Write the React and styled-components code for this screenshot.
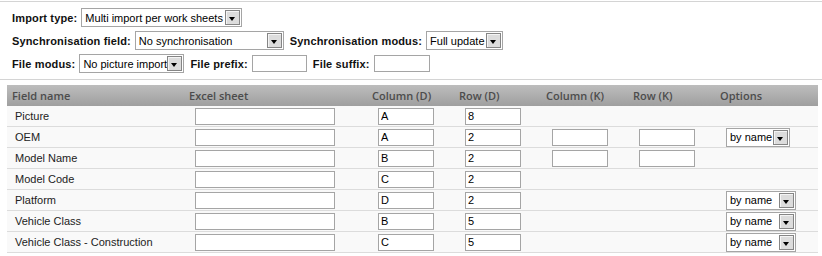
import React from 'react';
import styled, { createGlobalStyle } from 'styled-components';

const GlobalStyle = createGlobalStyle`
  body {
    margin: 0;
    background: #fff;
    font-family: "Liberation Sans", Arial, sans-serif;
    font-size: 11px;
    color: #222;
  }
`;

const columns = ['Field name', 'Excel sheet', 'Column (D)', 'Row (D)', 'Column (K)', 'Row (K)', 'Options'];

const rows = [
  { name: 'Picture', colD: 'A', rowD: '8' },
  { name: 'OEM', colD: 'A', rowD: '2', keys: true, option: 'narrow' },
  { name: 'Model Name', colD: 'B', rowD: '2', keys: true },
  { name: 'Model Code', colD: 'C', rowD: '2' },
  { name: 'Platform', colD: 'D', rowD: '2', option: 'wide' },
  { name: 'Vehicle Class', colD: 'B', rowD: '5', option: 'wide' },
  { name: 'Vehicle Class - Construction', colD: 'C', rowD: '5', option: 'wide' },
];

function Select({ value, width }) {
  return (
    <SelectBox $width={width}>
      <SelectValue>{value}</SelectValue>
      <SelectArrow />
    </SelectBox>
  );
}

function App() {
  return (
    <Page>
      <GlobalStyle />
      <Settings>
        <SettingsRow>
          <Label>Import type:</Label>
          <Select value="Multi import per work sheets" width={161} />
        </SettingsRow>
        <SettingsRow>
          <Label>Synchronisation field:</Label>
          <Select value="No synchronisation" width={149} />
          <Label>Synchronisation modus:</Label>
          <Select value="Full update" width={77} />
        </SettingsRow>
        <SettingsRow>
          <Label>File modus:</Label>
          <Select value="No picture import" width={105} />
          <Label>File prefix:</Label>
          <TextInput $width={55} defaultValue="" />
          <Label>File suffix:</Label>
          <TextInput $width={56} defaultValue="" />
        </SettingsRow>
      </Settings>

      <Table>
        <HeaderRow>
          {columns.map((c) => (
            <HeaderCell key={c}>{c}</HeaderCell>
          ))}
        </HeaderRow>
        {rows.map((r) => (
          <Row key={r.name}>
            <NameCell>{r.name}</NameCell>
            <Cell><TextInput $width={140} defaultValue="" /></Cell>
            <Cell><TextInput $width={56} defaultValue={r.colD} /></Cell>
            <Cell><TextInput $width={56} defaultValue={r.rowD} /></Cell>
            <Cell>{r.keys && <TextInput $width={56} defaultValue="" />}</Cell>
            <Cell>{r.keys && <TextInput $width={56} defaultValue="" />}</Cell>
            <Cell>
              {r.option && <Select value="by name" width={r.option === 'narrow' ? 64 : 70} />}
            </Cell>
          </Row>
        ))}
      </Table>
    </Page>
  );
}

export default App;

const Page = styled.div`
  width: 822px;
  padding-top: 1px;
`;

const Settings = styled.div`
  border-top: 1px solid #d4d4d4;
  border-bottom: 1px solid #d4d4d4;
  padding: 6px 12px 6px;
  display: flex;
  flex-direction: column;
  gap: 4px;
`;

const SettingsRow = styled.div`
  display: flex;
  align-items: center;
  height: 19px;
`;

const Label = styled.span`
  font-weight: bold;
  color: #111;
  letter-spacing: 0.15px;
  margin-right: 4px;
  white-space: nowrap;
`;

const SelectBox = styled.div`
  box-sizing: border-box;
  width: ${(p) => p.$width}px;
  height: 19px;
  border: 1px solid #a5a5a5;
  background: #fff;
  padding: 1px;
  display: flex;
  align-items: center;
  margin-right: 6px;
  flex-shrink: 0;
`;

const SelectValue = styled.span`
  flex: 1;
  padding-left: 2px;
  white-space: nowrap;
  overflow: hidden;
  color: #000;
`;

const SelectArrow = styled.span`
  box-sizing: border-box;
  width: 15px;
  height: 15px;
  border: 1px solid #858585;
  box-shadow: inset 1px 1px 0 #f4f4f4;
  background: #dcdcdc;
  position: relative;
  flex-shrink: 0;

  &::after {
    content: '';
    position: absolute;
    left: 3px;
    top: 6px;
    border-left: 3.5px solid transparent;
    border-right: 3.5px solid transparent;
    border-top: 4px solid #000;
  }
`;

const TextInput = styled.input`
  box-sizing: border-box;
  width: ${(p) => p.$width}px;
  height: 17px;
  border: 1px solid #a5a5a5;
  padding: 0 2px;
  margin: 0 6px 0 0;
  font-family: "Liberation Sans", Arial, sans-serif;
  font-size: 11px;
  color: #000;
  background: #fff;
  outline: none;
`;

const Table = styled.div`
  margin: 5px 4px 0 7px;
`;

const gridColumns = '177px 183px 87px 87px 87px 87px 1fr';

const HeaderRow = styled.div`
  display: grid;
  grid-template-columns: ${gridColumns};
  height: 21px;
  align-items: center;
  background: linear-gradient(#bdbdbd, #9f9f9f);
`;

const HeaderCell = styled.div`
  padding-left: 5px;
  font-family: "Open Sans", sans-serif;
  font-weight: 600;
  font-size: 11px;
  color: #4c4c4c;
  white-space: nowrap;
`;

const Row = styled.div`
  box-sizing: border-box;
  display: grid;
  grid-template-columns: ${gridColumns};
  height: 21px;
  align-items: center;
  background: #f9f9f9;
  border-bottom: 1px solid #dcdcdc;
`;

const NameCell = styled.div`
  padding-left: 8px;
  color: #222;
  white-space: nowrap;
`;

const Cell = styled.div`
  padding-left: 11px;
  display: flex;
  align-items: center;
`;
